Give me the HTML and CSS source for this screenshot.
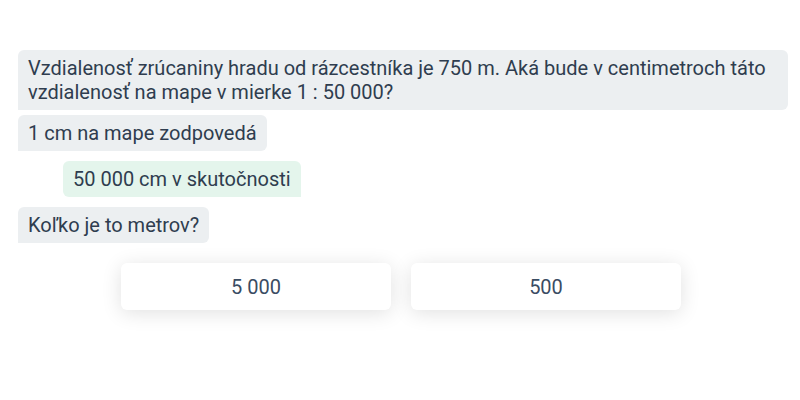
FILE: index.html
```html
<!DOCTYPE html>
<html lang="sk">
<head>
<meta charset="utf-8">
<link rel="stylesheet" href="styles.css">
</head>
<body>
<div class="chat">
  <div class="bubble bot">Vzdialenosť zrúcaniny hradu od rázcestníka je 750 m. Aká bude v centimetroch táto vzdialenosť na mape v mierke 1 : 50 000?</div>
  <div class="bubble bot tight">1 cm na mape zodpovedá</div>
  <div class="bubble user">50 000 cm v skutočnosti</div>
  <div class="bubble bot">Koľko je to metrov?</div>
  <div class="answers">
    <button class="answer">5 000</button>
    <button class="answer">500</button>
  </div>
</div>
</body>
</html>
```
FILE: styles.css
```css
html, body {
  margin: 0;
  padding: 0;
  background: #ffffff;
}
body {
  font-family: Roboto, "Noto Sans", sans-serif;
  color: #2f3d4f;
  min-height: 400px;
}
.chat {
  display: flex;
  flex-direction: column;
  align-items: flex-start;
  padding: 50px 12px 40px 18px;
}
.bubble {
  font-size: 20px;
  line-height: 24px;
  padding: 6px 10px;
  border-radius: 6px;
  margin-bottom: 10px;
}
.bot {
  background: #eceff1;
  border-bottom-left-radius: 0;
}
.tight {
  margin-top: -5px;
}
.user {
  background: #e4f5ec;
  border-bottom-right-radius: 0;
  margin-left: 45px;
}
.answers {
  align-self: stretch;
  display: flex;
  justify-content: center;
  gap: 20px;
  margin-top: 10px;
  padding-right: 4px;
}
.answer {
  width: 270px;
  height: 47px;
  border: none;
  border-radius: 6px;
  background: #ffffff;
  box-shadow: 0 3px 20px rgba(0, 0, 0, 0.12);
  font-family: Roboto, "Noto Sans", sans-serif;
  font-size: 20px;
  color: #3a4c63;
}
```
